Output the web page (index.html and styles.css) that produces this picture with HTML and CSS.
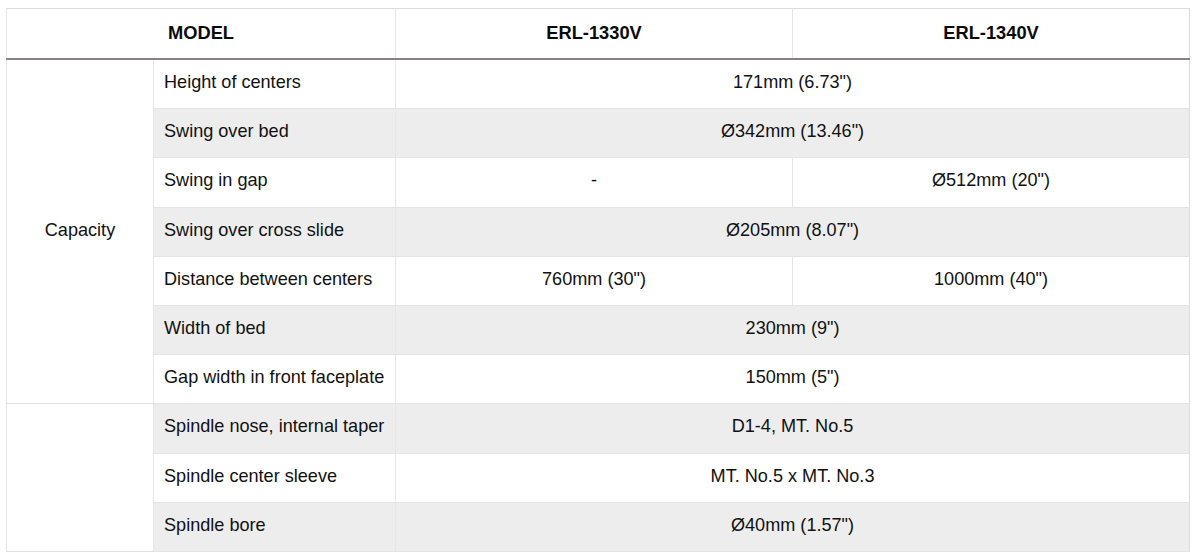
FILE: index.html
```html
<!DOCTYPE html>
<html lang="en">
<head>
<meta charset="utf-8">
<title>Specifications</title>
<link rel="stylesheet" href="styles.css">
</head>
<body>
<div class="wrap">
<table class="spec">
  <colgroup>
    <col class="c-group">
    <col class="c-item">
    <col class="c-model">
    <col class="c-model">
  </colgroup>
  <thead>
    <tr>
      <th colspan="2">MODEL</th>
      <th>ERL-1330V</th>
      <th>ERL-1340V</th>
    </tr>
  </thead>
  <tbody>
    <tr>
      <td class="group" rowspan="7">Capacity</td>
      <td class="item">Height of centers</td>
      <td class="val" colspan="2">171mm (6.73")</td>
    </tr>
    <tr class="alt">
      <td class="item">Swing over bed</td>
      <td class="val" colspan="2">Ø342mm (13.46")</td>
    </tr>
    <tr>
      <td class="item">Swing in gap</td>
      <td class="val">-</td>
      <td class="val">Ø512mm (20")</td>
    </tr>
    <tr class="alt">
      <td class="item">Swing over cross slide</td>
      <td class="val" colspan="2">Ø205mm (8.07")</td>
    </tr>
    <tr>
      <td class="item">Distance between centers</td>
      <td class="val">760mm (30")</td>
      <td class="val">1000mm (40")</td>
    </tr>
    <tr class="alt">
      <td class="item">Width of bed</td>
      <td class="val" colspan="2">230mm (9")</td>
    </tr>
    <tr>
      <td class="item">Gap width in front faceplate</td>
      <td class="val" colspan="2">150mm (5")</td>
    </tr>
    <tr class="alt">
      <td class="group" rowspan="3"></td>
      <td class="item">Spindle nose, internal taper</td>
      <td class="val" colspan="2">D1-4, MT. No.5</td>
    </tr>
    <tr>
      <td class="item">Spindle center sleeve</td>
      <td class="val" colspan="2">MT. No.5 x MT. No.3</td>
    </tr>
    <tr class="alt">
      <td class="item">Spindle bore</td>
      <td class="val" colspan="2">Ø40mm (1.57")</td>
    </tr>
  </tbody>
</table>
</div>
</body>
</html>
```

FILE: styles.css
```css
html, body {
  margin: 0;
  padding: 0;
  background: #ffffff;
}

.wrap {
  padding: 8px 10px 0 6px;
}

.spec {
  width: 1184px;
  border-collapse: collapse;
  table-layout: fixed;
  font-family: "Liberation Sans", Arial, sans-serif;
  font-size: 18.1px;
  line-height: 21px;
  color: #111;
  border: 1px solid #dcdcdc;
}

.c-group { width: 147px; }
.c-item { width: 242px; }
.c-model { width: 397px; }

.spec th {
  height: 47px;
  padding: 0 0 2px;
  font-size: 18.3px;
  font-weight: bold;
  color: #0a0a0a;
  text-align: center;
  background: #fff;
  border-bottom: 2px solid #8c8184;
  border-left: 1px solid #e6e6e6;
}

.spec td {
  height: 45.2px;
  padding: 0 0 3px;
  border-bottom: 1px solid #e4e4e4;
  border-left: 1px solid #e6e6e6;
  vertical-align: middle;
}

.spec td.group {
  text-align: center;
  background: #fff;
  border-bottom: 1px solid #e0e0e0;
}

.spec td.item {
  padding-left: 10px;
  text-align: left;
}

.spec td.val {
  text-align: center;
}

.spec tr.alt td.item,
.spec tr.alt td.val {
  background: #ededed;
}
```
